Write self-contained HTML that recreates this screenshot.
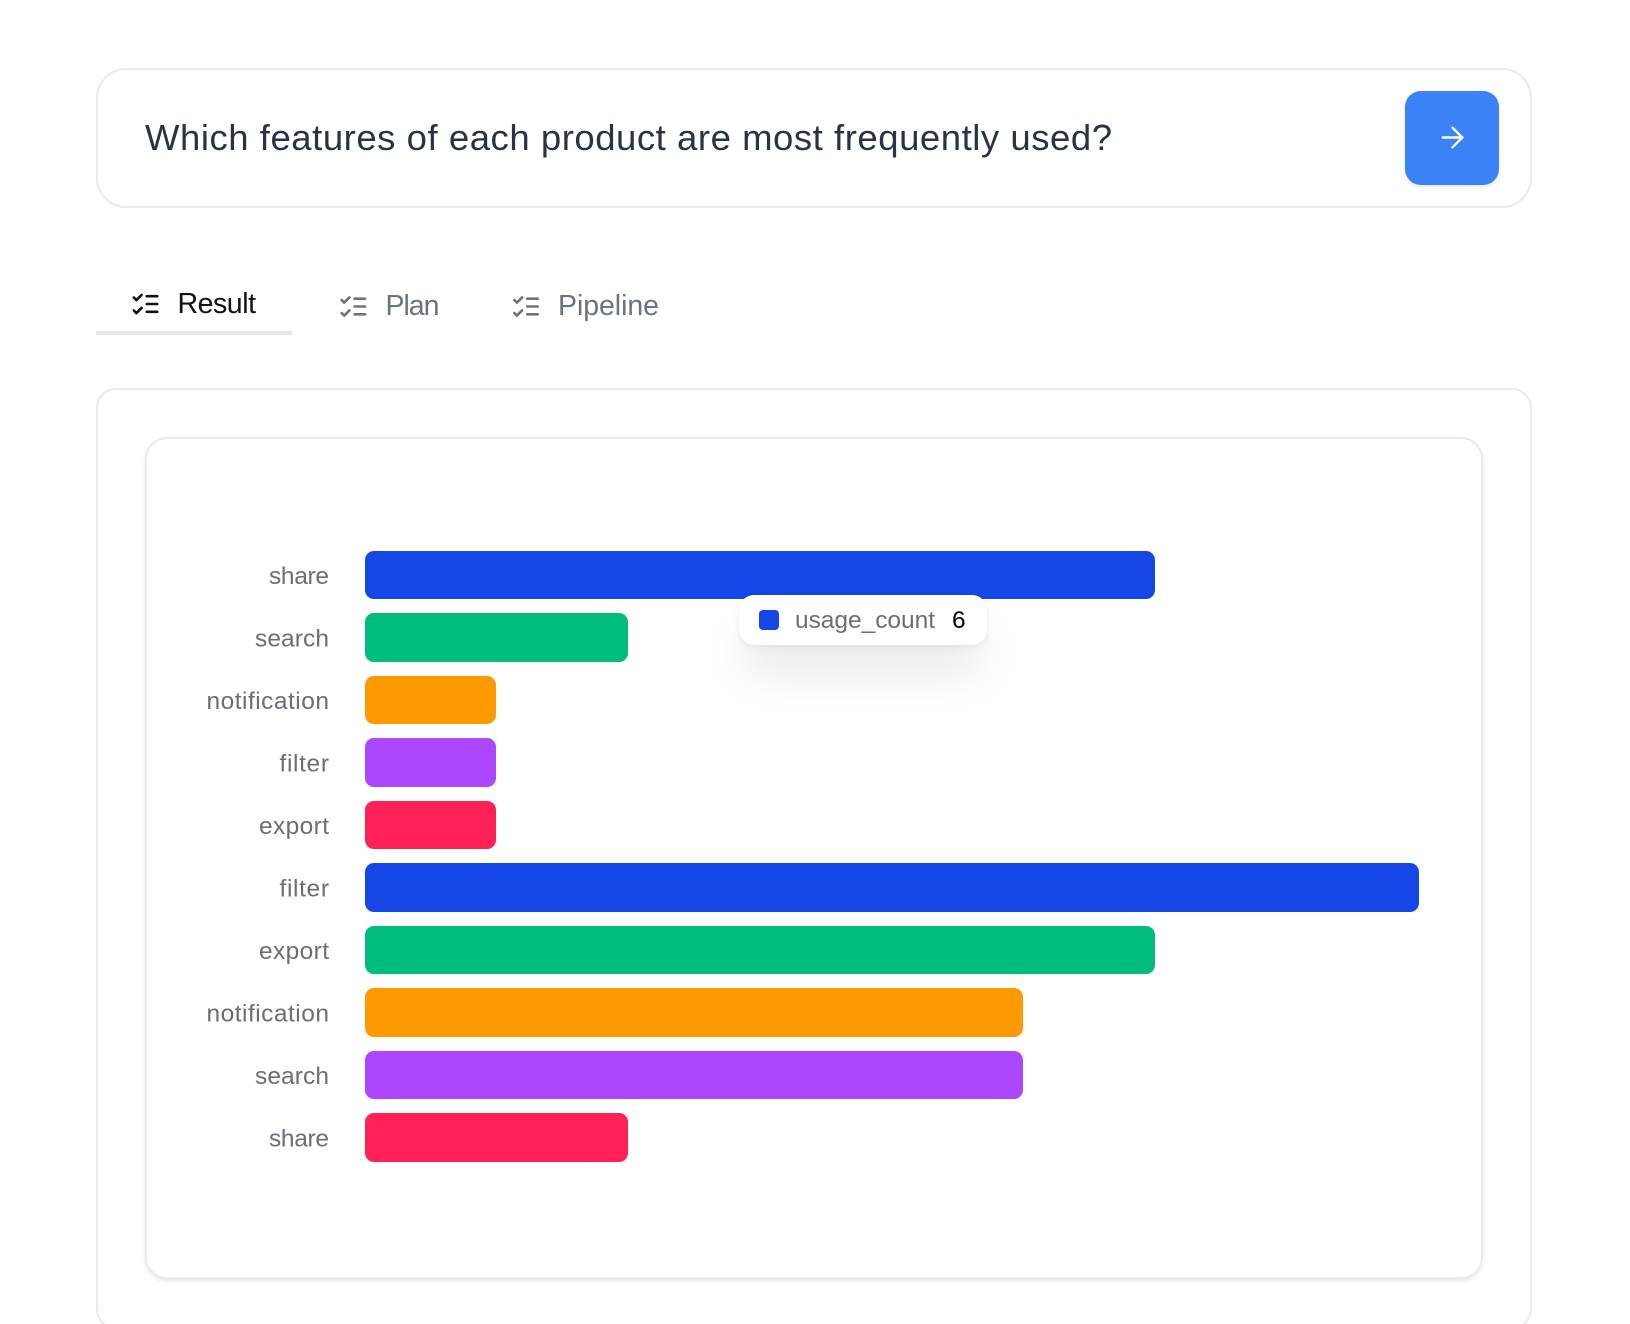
<!DOCTYPE html>
<html lang="en">
<head>
<meta charset="utf-8">
<title>Result</title>
<style>
html,body{margin:0;padding:0;background:#fff;width:1630px;height:1324px;overflow:hidden}
.a{position:absolute;box-sizing:border-box}
svg{position:absolute;left:0;top:0;overflow:visible}
text{font-family:"Liberation Sans",sans-serif}
.bar{position:absolute;left:365px;height:48.7px;border-radius:9px}
.l{font-size:24.5px;fill:#6a6e76}
</style>
</head>
<body>
<div style="position:relative;width:1630px;height:1324px;overflow:hidden">
  <div class="a" style="left:95.5px;top:68px;width:1436.5px;height:140px;border:2px solid #e9eaed;border-radius:30px"></div>
  <div class="a" style="left:1405px;top:91px;width:94px;height:94px;background:#3b82f6;border-radius:16px;box-shadow:0 2px 5px rgba(0,0,0,.1)"></div>

  <div class="a" style="left:95.6px;top:331px;width:196px;height:4.4px;background:#e7e8ea"></div>

  <div class="a" style="left:95.5px;top:388px;width:1436.5px;height:941px;border:2px solid #e9eaed;border-radius:20px"></div>
  <div class="a" style="left:144.5px;top:437px;width:1338.5px;height:842px;border:2px solid #e9eaed;border-radius:22px;box-shadow:0 2px 4px rgba(0,0,0,.1)"></div>

  <div class="bar" style="top:550.6px;width:790px;background:#1447e6"></div>
  <div class="bar" style="top:613px;width:263px;background:#00bc7d"></div>
  <div class="bar" style="top:675.6px;width:131px;background:#fe9a00"></div>
  <div class="bar" style="top:738px;width:131px;background:#ad46ff"></div>
  <div class="bar" style="top:800.6px;width:131px;background:#ff2056"></div>
  <div class="bar" style="top:863px;width:1054px;background:#1447e6"></div>
  <div class="bar" style="top:925.6px;width:790px;background:#00bc7d"></div>
  <div class="bar" style="top:988px;width:658px;background:#fe9a00"></div>
  <div class="bar" style="top:1050.6px;width:658px;background:#ad46ff"></div>
  <div class="bar" style="top:1113px;width:263px;background:#ff2056"></div>

  <div class="a" style="left:739px;top:594.5px;width:247.5px;height:50px;background:#fff;border-radius:15px;box-shadow:0 0 3px rgba(0,0,0,.05),0 4px 8px rgba(0,0,0,.05),0 32px 44px -6px rgba(0,0,0,.1)"></div>
  <div class="a" style="left:759px;top:610.3px;width:19.5px;height:19.5px;background:#1447e6;border-radius:4px"></div>

  <svg width="1630" height="1324" viewBox="0 0 1630 1324" xmlns="http://www.w3.org/2000/svg">
    <text x="145" y="150" font-size="36.5" fill="#283347" textLength="967" lengthAdjust="spacing">Which features of each product are most frequently used?</text>

    <g fill="none" stroke="#fff" stroke-width="1.7" stroke-linecap="round" stroke-linejoin="round" transform="translate(1435.7 120.7) scale(1.4)">
      <path d="M5 12h14"/><path d="m12 5 7 7-7 7"/>
    </g>

    <g fill="none" stroke="#111" stroke-width="2" stroke-linecap="round" stroke-linejoin="round" transform="translate(129.9 288.4) scale(1.3)">
      <path d="m3 17 2 2 4-4"/><path d="m3 7 2 2 4-4"/><path d="M13 6h8"/><path d="M13 12h8"/><path d="M13 18h8"/>
    </g>
    <text x="177.5" y="313" font-size="28.5" fill="#111" textLength="78.5" lengthAdjust="spacing">Result</text>

    <g fill="none" stroke="#6b7280" stroke-width="2" stroke-linecap="round" stroke-linejoin="round" transform="translate(337.7 290.9) scale(1.3)">
      <path d="m3 17 2 2 4-4"/><path d="m3 7 2 2 4-4"/><path d="M13 6h8"/><path d="M13 12h8"/><path d="M13 18h8"/>
    </g>
    <text x="385.5" y="315" font-size="28.5" fill="#6b7280" textLength="54" lengthAdjust="spacing">Plan</text>

    <g fill="none" stroke="#6b7280" stroke-width="2" stroke-linecap="round" stroke-linejoin="round" transform="translate(510.4 290.9) scale(1.3)">
      <path d="m3 17 2 2 4-4"/><path d="m3 7 2 2 4-4"/><path d="M13 6h8"/><path d="M13 12h8"/><path d="M13 18h8"/>
    </g>
    <text x="558" y="315" font-size="28.5" fill="#6b7280" textLength="101" lengthAdjust="spacing">Pipeline</text>

    <text class="l" x="269" y="584" textLength="60" lengthAdjust="spacing">share</text>
    <text class="l" x="255" y="646.5" textLength="74" lengthAdjust="spacing">search</text>
    <text class="l" x="206.5" y="709" textLength="122.5" lengthAdjust="spacing">notification</text>
    <text class="l" x="279.5" y="771.5" textLength="49.5" lengthAdjust="spacing">filter</text>
    <text class="l" x="259" y="834" textLength="70" lengthAdjust="spacing">export</text>
    <text class="l" x="279.5" y="896.5" textLength="49.5" lengthAdjust="spacing">filter</text>
    <text class="l" x="259" y="959" textLength="70" lengthAdjust="spacing">export</text>
    <text class="l" x="206.5" y="1021.5" textLength="122.5" lengthAdjust="spacing">notification</text>
    <text class="l" x="255" y="1084" textLength="74" lengthAdjust="spacing">search</text>
    <text class="l" x="269" y="1146.5" textLength="60" lengthAdjust="spacing">share</text>

    <text x="795" y="628" font-size="24.5" fill="#6a6e76" textLength="140" lengthAdjust="spacing">usage_count</text>
    <text x="952" y="628" font-size="24.5" fill="#000">6</text>
  </svg>
</div>
</body>
</html>
